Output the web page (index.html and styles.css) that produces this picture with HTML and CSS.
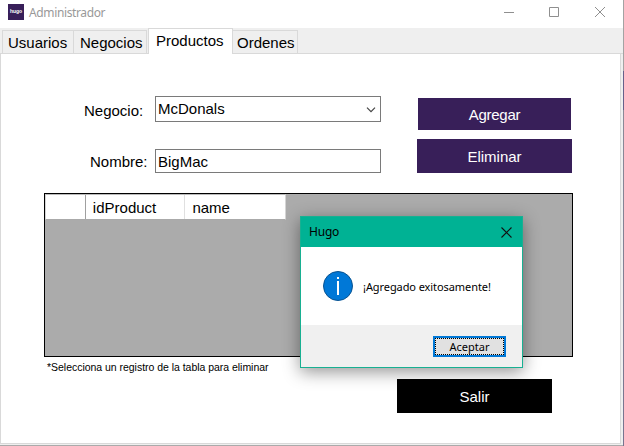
FILE: index.html
```html
<!DOCTYPE html>
<html lang="es">
<head>
<meta charset="utf-8">
<title>Administrador</title>
<link rel="stylesheet" href="styles.css">
</head>
<body>
<div class="window">
  <header class="titlebar">
    <span class="logo">hugo</span>
    <span class="title">Administrador</span>
    <svg class="controls" width="102" height="12" viewBox="0 0 102 12" fill="none" stroke="#8f8f8f">
      <path d="M0 6.500h10M45.500 1.500h9v9h-9zM91 1l10 10M101 1L91 11"/>
    </svg>
  </header>
  <nav class="tabs">
    <span class="tab users">Usuarios</span>
    <span class="tab shops">Negocios</span>
    <span class="tab active">Productos</span>
    <span class="tab orders">Ordenes</span>
  </nav>
  <main class="page">
    <section class="form">
      <div class="fields">
        <label class="label">Negocio:</label>
        <div class="box combo">McDonals
          <svg class="chevron" width="10" height="6" viewBox="0 0 10 6" fill="none" stroke="#444" stroke-width="1.200"><path d="M1 .7l4 4 4-4"/></svg>
        </div>
        <label class="label name">Nombre:</label>
        <div class="box">BigMac</div>
      </div>
      <div class="actions">
        <div class="btn add"><span>Agregar</span></div>
        <div class="btn remove">Eliminar</div>
      </div>
    </section>
    <section class="table">
      <div class="thead">
        <span class="th row-head"></span>
        <span class="th id">idProduct</span>
        <span class="th">name</span>
      </div>
    </section>
    <p class="note"><span>*Selecciona un registro de la tabla para eliminar</span></p>
    <div class="btn exit">Salir</div>
  </main>
</div>
<div class="desktop"></div>
<div class="dialog">
  <div class="dialog-title">
    <span>Hugo</span>
    <svg width="11" height="11" viewBox="0 0 11 11" stroke="#111" stroke-width="1.100"><path d="M.5.5l10 10M10.500.5l-10 10"/></svg>
  </div>
  <div class="dialog-body">
    <svg width="30" height="30" viewBox="0 0 30 30">
      <circle cx="15" cy="15" r="14.500" fill="#0078d7" stroke="#0a5390"/>
      <path d="M14 6h2v2h-2zM14 10h2v14h-2z" fill="#fff"/>
    </svg>
    <span class="message">¡Agregado exitosamente!</span>
  </div>
  <div class="dialog-foot"><div class="ok"><span>Aceptar</span></div></div>
</div>
</body>
</html>
```
FILE: styles.css
```css
* { box-sizing: border-box; }
body {
  margin: 0;
  width: 624px;
  height: 446px;
  display: flex;
  overflow: hidden;
  background: #efefef;
  color: #000;
  font: 15px/18px "Liberation Sans", Arial, sans-serif;
}
.window {
  width: 623px;
  height: 446px;
  display: flex;
  flex-direction: column;
  border-bottom: 1px solid #aaa;
}
.desktop {
  width: 1px;
  height: 446px;
  background: linear-gradient(#a3a3a3 71px, #66608a 71px, #66608a 110px, #8b8997 110px, #77738f);
}
.titlebar {
  height: 28px;
  flex: none;
  display: flex;
  align-items: flex-start;
  background: #fff;
  padding: 4px 17px 0 8px;
}
.logo {
  width: 16px;
  height: 16px;
  background: #381f59;
  color: #fff;
  font: bold 5px/15px "Liberation Sans", sans-serif;
  text-align: center;
}
.title {
  margin-left: 5px;
  color: #999;
  font: 12px/18px "Noto Sans", sans-serif;
  letter-spacing: -.37px;
}
.controls { margin: 2px 0 0 auto; }
.tabs {
  height: 26px;
  flex: none;
  display: flex;
  align-items: flex-end;
  padding-left: 2px;
  border-bottom: 1px solid #d9d9d9;
}
.tab {
  height: 23px;
  border: 1px solid #d9d9d9;
  border-bottom: 0;
  padding: 3px 0 0 5px;
  white-space: nowrap;
}
.users { width: 72px; }
.shops { width: 74px; margin-left: -1px; padding-left: 6px; }
.tab.active {
  width: 85px;
  height: 26px;
  margin: 0 0 -1px 1px;
  padding: 3px 0 0 7px;
  background: #fff;
}
.orders { width: 65px; border-left: 0; padding-left: 4px; }
.page {
  width: 621px;
  height: 390px;
  border: 1px solid #d9d9d9;
  border-top: 0;
  background: #fff;
  padding: 42px 0 0 43px;
}
.form { display: flex; height: 97px; }
.fields {
  display: grid;
  grid-template-columns: 111px 226px;
  grid-template-rows: 26px 24px;
  row-gap: 27px;
  height: 77px;
}
.label { padding: 6px 0 0 40px; }
.label.name { padding: 4px 0 0 46px; }
.box {
  border: 1px solid #7a7a7a;
  padding: 3px 4px 0 2px;
  display: flex;
  justify-content: space-between;
}
.chevron { margin-top: 7px; }
.actions { margin: 2px 0 0 36px; width: 155px; }
.btn {
  height: 34px;
  width: 155px;
  background: #381f59;
  color: #fff;
  text-align: center;
  line-height: 35px;
}
.add { width: 153px; height: 32px; margin: 0 0 9px 1px; line-height: 33px; }
.add span { letter-spacing: -.25px; }
.table {
  width: 529px;
  height: 164px;
  border: 1px solid #000;
  background: #ababab;
}
.thead {
  display: flex;
  width: 241px;
  height: 26px;
  background: #fff;
  border: 1px solid #d5d5d5;
  border-top-color: #bbb;
  border-bottom-color: #aaa;
}
.th { padding: 4px 0 0 7px; width: 100px; }
.row-head { width: 40px; border-right: 1px solid #a0a0a0; }
.id { border-right: 1px solid #e0e0e0; }
.note {
  margin: 1px 0 0 3px;
  height: 21px;
  font-size: 10.500px;
  line-height: 18px;
  white-space: nowrap;
  letter-spacing: -.03px;
}
.exit { margin-left: 353px; background: #000; }
.dialog {
  position: absolute;
  left: 300px;
  top: 216px;
  width: 223px;
  height: 152px;
  border: 1px solid #18b092;
  background: #fff;
  box-shadow: 0 4px 16px rgba(0, 0, 0, .42);
  display: flex;
  flex-direction: column;
  font-family: "Noto Sans", sans-serif;
}
.dialog-title {
  height: 30px;
  background: #00b294;
  display: flex;
  justify-content: space-between;
  align-items: center;
  padding: 0 10px 0 8px;
  font-size: 12px;
  letter-spacing: -.2px;
}
.dialog-body {
  height: 78px;
  display: flex;
  align-items: center;
  padding-left: 22px;
  gap: 10px;
}
.message {
  padding-top: 2px;
  font-size: 11px;
  letter-spacing: -.08px;
  white-space: nowrap;
}
.dialog-foot {
  flex: 1;
  background: #f0f0f0;
  display: flex;
  justify-content: flex-end;
  padding: 11px 16px 0 0;
}
.ok {
  width: 73px;
  height: 21px;
  border: 2px solid #0078d7;
  background: #e1e1e1;
  font-size: 11px;
}
.ok span {
  display: block;
  height: 17px;
  border: 1px dotted #000;
  line-height: 16px;
  text-align: center;
}
```
